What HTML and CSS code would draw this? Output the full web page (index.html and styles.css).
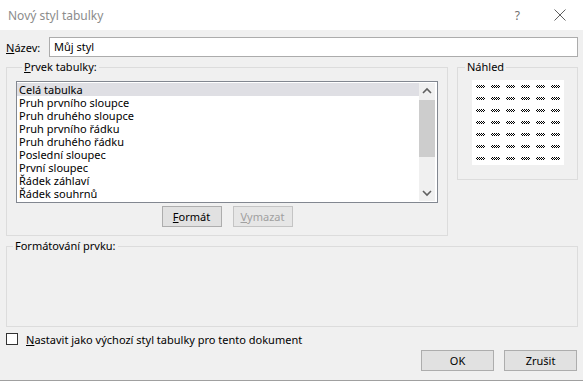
FILE: index.html
```html
<!DOCTYPE html>
<html lang="cs">
<head>
    <meta charset="UTF-8">
    <title>Nový styl tabulky</title>
    <link rel="stylesheet" href="styles.css">
</head>
<body>
    <div class="dialog">
        <div class="titlebar">
            <span class="title">Nový styl tabulky</span>
            <div class="title-buttons">
                <span class="help">?</span>
                <svg class="close" width="12" height="12" viewBox="0 0 12 12">
                    <path d="M0.5 0.5 L11.5 11.5 M11.5 0.5 L0.5 11.5" stroke="#5f5f5f" stroke-width="1" fill="none"/>
                </svg>
            </div>
        </div>

        <div class="content">
            <div class="name-row">
                <label class="name-label"><u>N</u>ázev:</label>
                <div class="name-input">Můj styl</div>
            </div>

            <div class="main-row">
                <fieldset class="group element-group">
                    <legend><u>P</u>rvek tabulky:</legend>
                    <div class="listbox">
                        <ul class="items">
                            <li class="selected">Celá tabulka</li>
                            <li>Pruh prvního sloupce</li>
                            <li>Pruh druhého sloupce</li>
                            <li>Pruh prvního řádku</li>
                            <li>Pruh druhého řádku</li>
                            <li>Poslední sloupec</li>
                            <li>První sloupec</li>
                            <li>Řádek záhlaví</li>
                            <li>Řádek souhrnů</li>
                        </ul>
                        <div class="scrollbar">
                            <svg class="arrow" width="16" height="16" viewBox="0 0 16 16">
                                <path d="M4 10 L8 6 L12 10" stroke="#606060" stroke-width="1.6" fill="none"/>
                            </svg>
                            <div class="track"><div class="thumb"></div></div>
                            <svg class="arrow" width="16" height="16" viewBox="0 0 16 16">
                                <path d="M4 6 L8 10 L12 6" stroke="#606060" stroke-width="1.6" fill="none"/>
                            </svg>
                        </div>
                    </div>
                    <div class="list-buttons">
                        <button class="btn small"><u>F</u>ormát</button>
                        <button class="btn small" disabled><u>V</u>ymazat</button>
                    </div>
                </fieldset>

                <fieldset class="group preview-group">
                    <legend>Náhled</legend>
                    <div class="preview">
                        <div class="preview-grid" id="grid"></div>
                    </div>
                </fieldset>
            </div>

            <fieldset class="group format-group">
                <legend>Formátování prvku:</legend>
            </fieldset>

            <div class="check-row">
                <span class="checkbox"></span>
                <span class="check-label"><u>N</u>astavit jako výchozí styl tabulky pro tento dokument</span>
            </div>

            <div class="dialog-buttons">
                <button class="btn wide">OK</button>
                <button class="btn wide">Zrušit</button>
            </div>
        </div>
    </div>

    <script>
        (function() {
            const grid = document.getElementById('grid');
            for (let i = 0; i < 42; i++) {
                const cell = document.createElement('span');
                cell.className = 'dots';
                grid.appendChild(cell);
            }
        })();
    </script>
</body>
</html>
```

FILE: styles.css
```css
* {
    box-sizing: border-box;
}
html, body {
    margin: 0;
    padding: 0;
}
body {
    width: 583px;
    height: 381px;
    overflow: hidden;
    background: #f0f0f0;
    font-family: "Noto Sans", "DejaVu Sans", sans-serif;
    font-size: 11px;
    color: #000;
}
.dialog {
    height: 381px;
    border-bottom: 1px solid #a0a0a0;
}
.titlebar {
    height: 30px;
    background: #fff;
    display: flex;
    align-items: center;
    justify-content: space-between;
    padding: 0 17px 0 8px;
}
.title {
    color: #8c8c8c;
    font-size: 12px;
}
.title-buttons {
    display: flex;
    align-items: center;
    gap: 34px;
}
.help {
    color: #6f6f6f;
    font-size: 12px;
}
.content {
    padding: 7px 5px 0 6px;
}
.name-row {
    display: flex;
    align-items: center;
    height: 20px;
}
.name-label {
    width: 43px;
}
.name-input {
    flex: 1;
    height: 20px;
    background: #fff;
    border: 1px solid #acacac;
    padding: 0 4px;
    line-height: 18px;
}
.main-row {
    display: flex;
    gap: 9px;
    margin-top: 3px;
}
.group {
    margin: 0;
    border: 1px solid #dcdcdc;
    min-width: 0;
}
.group legend {
    padding: 0 2px;
    margin-left: 6px;
    line-height: 14px;
}
.element-group {
    width: 442px;
    height: 176px;
    padding: 7px 9px 0 9px;
}
.listbox {
    height: 122px;
    border: 1px solid #828790;
    background: #fff;
    display: flex;
    padding: 1px 2px 1px 0;
}
.items {
    flex: 1;
    margin: 0;
    padding: 0;
    list-style: none;
}
.items li {
    height: 13px;
    line-height: 13px;
    padding-left: 2px;
}
.items li.selected {
    background: #dfdfe4;
}
.scrollbar {
    width: 16px;
    background: #f0f0f0;
    display: flex;
    flex-direction: column;
}
.arrow {
    display: block;
}
.track {
    flex: 1;
}
.thumb {
    height: 57px;
    margin-top: 1px;
    background: #cdcdcd;
}
.list-buttons {
    display: flex;
    justify-content: center;
    gap: 11px;
    margin-top: 3px;
}
.btn {
    font-family: inherit;
    font-size: 11px;
    color: #000;
    background: #e1e1e1;
    border: 1px solid #adadad;
    height: 21px;
    padding: 0;
}
.btn[disabled] {
    background: #e6e6e6;
    border-color: #c4c4c4;
    color: #a0a0a0;
}
.btn.small {
    width: 60px;
}
.btn.wide {
    width: 73px;
}
.preview-group {
    width: 121px;
    height: 120px;
    padding: 6px 0 0 0;
}
.preview-group legend {
    margin-left: 7px;
}
.preview {
    width: 92px;
    height: 85px;
    margin: 0 auto;
    background: #fff;
    padding: 5px 0 0 4px;
}
.preview-grid {
    display: grid;
    grid-template-columns: repeat(6, 9px);
    column-gap: 6px;
    row-gap: 9px;
}
.dots {
    display: block;
    width: 9px;
    height: 3px;
    background: repeating-conic-gradient(#000 0 25%, #fff 0 50%) 0 0 / 2px 2px;
}
.format-group {
    height: 88px;
    margin-top: 3px;
    padding: 0;
}
.check-row {
    display: flex;
    align-items: center;
    margin-top: 6px;
    height: 12px;
}
.checkbox {
    width: 12px;
    height: 12px;
    border: 1px solid #333;
    background: #fff;
}
.check-label {
    margin-left: 8px;
}
.dialog-buttons {
    display: flex;
    justify-content: flex-end;
    gap: 10px;
    margin-top: 5px;
    padding-right: 1px;
}
```
